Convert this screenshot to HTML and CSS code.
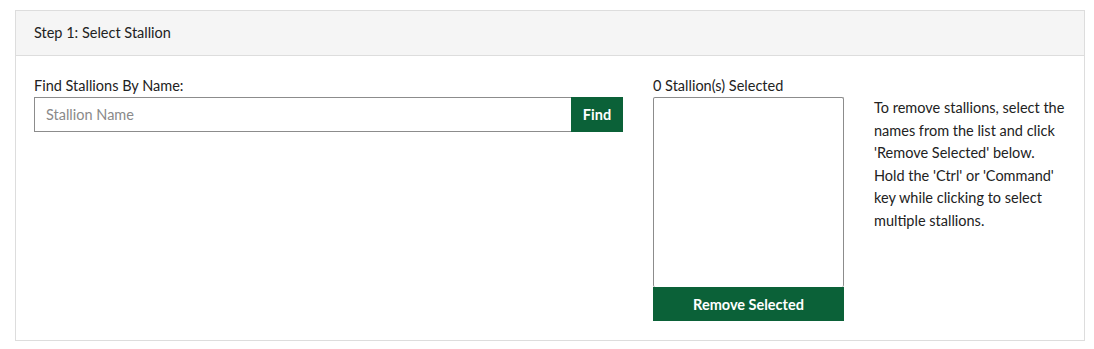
FILE: index.html
```html
<!DOCTYPE html>
<html lang="en">
<head>
<meta charset="UTF-8">
<meta name="viewport" content="width=device-width, initial-scale=1.0">
<title>Select Stallion</title>
<link rel="stylesheet" href="styles.css">
</head>
<body>
  <div class="panel">
    <div class="panel-heading">Step 1: Select Stallion</div>
    <div class="panel-body">
      <div class="find-col">
        <label for="stallionName">Find Stallions By Name:</label>
        <div class="search">
          <input type="text" id="stallionName" placeholder="Stallion Name">
          <button class="btn">Find</button>
        </div>
      </div>

      <div class="selected-col">
        <label for="selectedList">0 Stallion(s) Selected</label>
        <select id="selectedList" multiple></select>
        <button class="btn btn-block">Remove Selected</button>
      </div>

      <p class="help">
        To remove stallions, select the names from the list and click 'Remove Selected' below.
        Hold the 'Ctrl' or 'Command' key while clicking to select multiple stallions.
      </p>
    </div>
  </div>
</body>
</html>
```

FILE: styles.css
```css
body {
  margin: 0;
  padding: 10px 9px 8px 15px;
  font-family: Lato, "Open Sans", sans-serif;
  font-size: 14.5px;
  color: #222;
  background-color: #fff;
}

.panel {
  border: 1px solid #ddd;
}

.panel-heading {
  height: 44px;
  line-height: 44px;
  padding: 0 18px;
  background-color: #f5f5f5;
  border-bottom: 1px solid #ddd;
}

.panel-body {
  display: flex;
  align-items: flex-start;
  padding: 20px 18px 19px;
}

label {
  display: block;
  line-height: 20px;
  margin-bottom: 1px;
}

.find-col {
  width: 589px;
  flex-shrink: 0;
}

.search {
  display: flex;
}

.search input {
  flex: 1;
  min-width: 0;
  height: 35px;
  box-sizing: border-box;
  border: 1px solid #8c8c8c;
  border-right: none;
  padding: 0 11px;
  font-family: inherit;
  font-size: 14.5px;
  color: #222;
  outline: none;
}

.search input::placeholder {
  color: #8a8a8a;
}

.btn {
  height: 35px;
  width: 52px;
  padding: 0;
  border: none;
  background-color: #0b6138;
  color: #fff;
  font-family: inherit;
  font-size: 14.5px;
  font-weight: bold;
  cursor: pointer;
}

.selected-col {
  width: 191px;
  flex-shrink: 0;
  margin-left: 30px;
}

.selected-col select {
  display: block;
  width: 100%;
  height: 190px;
  box-sizing: border-box;
  border: 1px solid #8c8c8c;
  border-bottom: none;
  margin: 0;
}

.btn-block {
  display: block;
  width: 100%;
  height: 34px;
}

.help {
  flex: 1;
  min-width: 0;
  margin: 21px 0 0 30px;
  line-height: 22.6px;
}
```
